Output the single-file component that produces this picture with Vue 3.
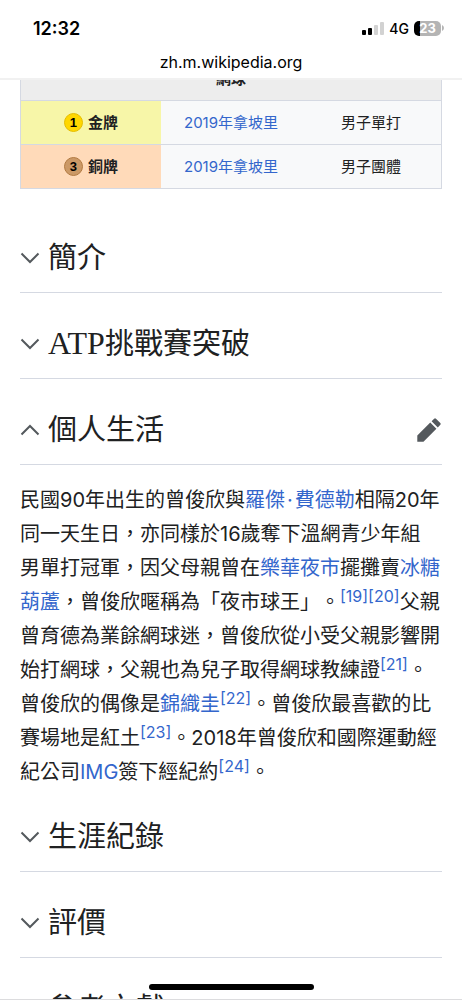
<script setup>
import { ref } from 'vue'

const medals = [
  { rank: 1, kind: 'gold', name: '金牌', games: '2019年拿坡里', event: '男子單打' },
  { rank: 3, kind: 'bronze', name: '銅牌', games: '2019年拿坡里', event: '男子團體' },
]

const sections = ref([
  { title: '簡介', open: false },
  { latin: 'ATP', title: '挑戰賽突破', open: false },
  { title: '個人生活', open: true, body: true },
  { title: '生涯紀錄', open: false },
  { title: '評價', open: false },
  { title: '參考文獻', open: false },
])
</script>

<template>
  <div class="screen" lang="zh-Hant">
    <header class="browser">
      <div class="status">
        <time class="clock">12:32</time>
        <div class="indicators">
          <svg class="signal" viewBox="0 0 22 14" aria-hidden="true">
            <rect x="0" y="9" width="4" height="5" rx="1" fill="#000" />
            <rect x="6" y="7" width="4" height="7" rx="1" fill="#000" />
            <rect x="12" y="4" width="4" height="10" rx="1" fill="#d2d2d2" />
            <rect x="18" y="1" width="4" height="13" rx="1" fill="#d2d2d2" />
          </svg>
          <span class="network">4G</span>
          <span class="battery">23</span>
          <svg class="cap" viewBox="0 0 2 6" aria-hidden="true"><path d="M0 0Q2 1 2 3T0 6Z" fill="#b4b4b4" /></svg>
        </div>
      </div>
      <div class="address">zh.m.wikipedia.org</div>
    </header>

    <main class="article">
      <table class="medals">
        <thead>
          <tr><th colspan="3" scope="colgroup">網球</th></tr>
        </thead>
        <tbody>
          <tr v-for="m in medals" :key="m.rank">
            <th scope="row" :class="m.kind">
              <span class="medal"><span class="coin">{{ m.rank }}</span>{{ m.name }}</span>
            </th>
            <td><a href="#">{{ m.games }}</a></td>
            <td>{{ m.event }}</td>
          </tr>
        </tbody>
      </table>

      <section v-for="s in sections" :key="s.title">
        <div class="heading">
          <h2>
            <button type="button" :aria-expanded="s.open" @click="s.open = !s.open">
              <svg class="chevron" :class="{ up: s.open }" viewBox="0 0 20 12" aria-hidden="true">
                <path d="M1.5 1.5 10 10l8.5-8.5" fill="none" stroke="#54595d" stroke-width="2" />
              </svg>
              <span><span v-if="s.latin" class="latin">{{ s.latin }}</span>{{ s.title }}</span>
            </button>
          </h2>
          <a v-if="s.open" class="edit" href="#" aria-label="編輯">
            <svg viewBox="0 0 20 20" aria-hidden="true">
              <path fill="#54595d" d="m16.77 8 1.94-2a1 1 0 0 0 0-1.41l-3.34-3.3a1 1 0 0 0-1.41 0L12 3.23zM1 14.25V19h4.75l9.96-9.96-4.75-4.75z" />
            </svg>
          </a>
        </div>
        <p v-if="s.body && s.open">民國90年出生的曾俊欣與<a href="#">羅傑<span class="dot">·</span>費德勒</a>相隔20年同一天生日，亦同樣於16歲奪下溫網青少年組男單打冠軍，因父母親曾在<a href="#">樂華夜市</a>擺攤賣<a href="#">冰糖葫蘆</a>，曾俊欣暱稱為「夜市球王」。<sup><a href="#">[19]</a></sup><sup><a href="#">[20]</a></sup>父親曾育德為業餘網球迷，曾俊欣從小受父親影響開始打網球，父親也為兒子取得網球教練證<sup><a href="#">[21]</a></sup>。曾俊欣的偶像是<a href="#">錦織圭</a><sup><a href="#">[22]</a></sup>。曾俊欣最喜歡的比賽場地是紅土<sup><a href="#">[23]</a></sup>。2018年曾俊欣和國際運動經紀公司<a href="#">IMG</a>簽下經紀約<sup><a href="#">[24]</a></sup>。</p>
      </section>
    </main>
    <div class="home-indicator"></div>
  </div>
</template>

<style>
body {
  background: #fff;
}
</style>

<style scoped>
.screen {
  position: relative;
  box-sizing: border-box;
  height: 100vh;
  overflow: hidden;
  border-bottom: 1px solid #dcdcde;
  background: #fff;
  color: #202122;
  font-family: Inter, "Noto Sans CJK TC", sans-serif;
}

a {
  color: #3366cc;
  text-decoration: none;
}

.browser {
  position: relative;
  z-index: 1;
  box-sizing: border-box;
  height: 80px;
  padding-top: 16px;
  border-bottom: 2px solid #f1f1f1;
  background: #fff;
  color: #000;
}

.status {
  display: flex;
  align-items: center;
  justify-content: space-between;
  height: 24px;
  padding: 0 18px 0 33px;
}

.clock {
  font-size: 18px;
  font-weight: 600;
}

.indicators {
  display: flex;
  align-items: center;
}

.signal {
  width: 22px;
  height: 14px;
  margin-right: 5px;
}

.network {
  margin-right: 5px;
  font-size: 14px;
  font-weight: 500;
}

.battery {
  width: 27px;
  height: 15px;
  border-radius: 5px;
  background: linear-gradient(90deg, #000 23%, #b4b4b4 23%);
  color: #fff;
  font-size: 13px;
  font-weight: 700;
  line-height: 15px;
  text-align: center;
}

.cap {
  width: 2px;
  height: 6px;
  margin-left: 1px;
}

.address {
  margin-top: 10px;
  font-size: 16px;
  line-height: 24px;
  text-align: center;
}

.article {
  margin-top: -24px;
  padding: 0 20px;
}

.medals {
  width: 100%;
  margin-bottom: 18px;
  border: 1px solid #d5d9e2;
  border-collapse: collapse;
  table-layout: fixed;
  background: #f8f9fa;
  font-size: 15px;
  line-height: 23px;
  text-align: center;
}

.medals tr {
  border-top: 1px solid #d5d9e2;
}

.medals th,
.medals td {
  padding: 10px 0;
}

.medals thead th {
  background: #ededed;
}

.medals .gold {
  background: #f7f6a8;
}

.medals .bronze {
  background: #ffdab9;
}

.medal {
  display: flex;
  align-items: center;
  justify-content: center;
  gap: 5px;
}

.coin {
  box-sizing: border-box;
  width: 19px;
  height: 19px;
  border: 1px solid #e5bd00;
  border-radius: 50%;
  background: #ffd700;
  color: #000;
  font: bold 13px/18px "Liberation Sans", sans-serif;
}

.bronze .coin {
  border-color: #b27a42;
  background: #cc9966;
}

.heading {
  display: flex;
  align-items: center;
  justify-content: space-between;
  padding: 29px 0 12px;
  border-bottom: 1px solid #d5d9e2;
}

h2 {
  margin: 0;
  font: 400 29px/44px "Liberation Serif", "Noto Sans CJK TC", serif;
}

.latin {
  font-size: 32px;
  line-height: 32px;
}

button {
  display: flex;
  align-items: center;
  gap: 8px;
  padding: 0;
  border: 0;
  background: none;
  color: inherit;
  font: inherit;
}

.chevron {
  width: 20px;
  height: 12px;
}

.chevron.up {
  transform: rotate(180deg);
}

.edit {
  height: 26px;
}

.edit svg {
  display: block;
  width: 26px;
  height: 26px;
}

p {
  margin: 18px 0 -3px;
  padding-right: 2px;
  font-size: 20px;
  line-height: 34px;
  text-spacing-trim: space-all;
}

.dot {
  padding: 0 2px;
}

sup {
  font-size: 16px;
  line-height: 0;
  vertical-align: 7px;
}

.home-indicator {
  position: absolute;
  bottom: 9px;
  left: 50%;
  width: 165px;
  height: 6px;
  margin-left: -82px;
  border-radius: 3px;
  background: #000;
}
</style>
